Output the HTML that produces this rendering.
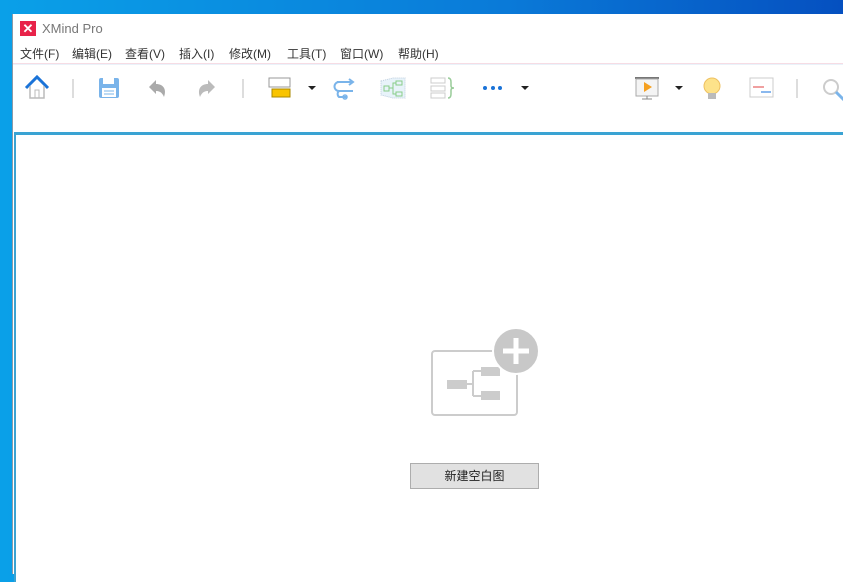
<!DOCTYPE html>
<html><head><meta charset="utf-8"><style>
*{margin:0;padding:0;box-sizing:border-box}
body{width:843px;height:572px;overflow:hidden;background:linear-gradient(90deg,#0aa0e8,#0a7ad8 60%,#0550c0);position:relative;font-family:"Liberation Sans","Noto Sans CJK SC",sans-serif}
#win{position:absolute;left:12px;top:14px;width:840px;height:560px;background:#fff;border-left:1px solid #8a9aa8}
.title{position:absolute;left:7px;top:7px;font-size:13px;color:#777;display:flex;align-items:center}
.logo{width:16px;height:15px;background:#e8234a;margin-right:6px;color:#fff;font-size:13px;font-weight:bold;line-height:15px;text-align:center}
.menu{position:absolute;left:0;top:31px;font-size:12px;color:#333;white-space:nowrap}
.menu span{position:absolute;top:0}
.pink{position:absolute;left:0;top:49px;width:840px;height:1px;background:#f6dce4}
.pink2{position:absolute;left:0;top:50px;width:840px;height:1px;background:#eaf2fa}
svg.tb{position:absolute;left:0;top:55px}
#canvas{position:absolute;left:1px;top:118px;width:840px;height:450px;border-top:3px solid #3aa3d3;border-left:2px solid #3aa3d3;background:#fff}
.btn{position:absolute;width:129px;height:26px;background:#e1e1e1;border:1px solid #adadad;font-size:12px;color:#222;text-align:center;line-height:24px}
</style></head><body>
<div id="win">
<div class="title"><div class="logo">✕</div>XMind Pro</div>
<div class="menu">
<span style="left:7px">文件(F)</span><span style="left:59px">编辑(E)</span><span style="left:112px">查看(V)</span><span style="left:166px">插入(I)</span><span style="left:216px">修改(M)</span><span style="left:274px">工具(T)</span><span style="left:327px">窗口(W)</span><span style="left:385px">帮助(H)</span>
</div>
<div class="pink"></div><div class="pink2"></div>
<svg class="tb" width="840" height="50" viewBox="12 69 840 50">
<path d="M25 88 L36 77 L47 88" fill="none" stroke="#1a73d8" stroke-width="3"/>
<path d="M29 86 V98 H43 V86" fill="none" stroke="#bbb" stroke-width="1.5"/>
<rect x="34" y="90" width="4" height="8" fill="none" stroke="#bbb"/>
<line x1="72" y1="79" x2="72" y2="98" stroke="#bbb"/>
<rect x="98" y="78" width="20" height="20" rx="2" fill="#7ab4ea"/>
<rect x="102" y="78" width="11" height="6" fill="#fff"/>
<rect x="101" y="88" width="14" height="9" fill="#fff"/>
<line x1="103" y1="91" x2="113" y2="91" stroke="#7ab4ea"/><line x1="103" y1="94" x2="113" y2="94" stroke="#7ab4ea"/>
<path d="M148 87 L155 80 V84 C162 84 166 89 163 97 C161 92 158 91 155 91 V94 Z" fill="#aaa"/>
<path d="M214 87 L207 80 V84 C200 84 196 89 199 97 C201 92 204 91 207 91 V94 Z" fill="#bbb"/>
<line x1="242" y1="79" x2="242" y2="98" stroke="#bbb"/>
<rect x="268" y="78" width="21" height="9" fill="#fff" stroke="#999"/>
<rect x="271" y="89" width="18" height="8" fill="#f9c400" stroke="#aa8800"/>
<path d="M307 86 h8 l-4 4z" fill="#222"/>
<path d="M336 82 H352 M348 79 l4 3 -4 3 M352 91 H338 a4 4 0 0 1 0-9 M338 91 a4 4 0 0 0 0 6 H346" fill="none" stroke="#7ab4ea" stroke-width="2"/>
<circle cx="344" cy="97" r="2" fill="none" stroke="#7ab4ea" stroke-width="1.5"/>
<path d="M380 81 L392 78 H404 V98 H392 L380 95 Z" fill="#e8f3fa" stroke="#bcd" stroke-dasharray="1 1"/>
<rect x="383" y="86" width="5" height="5" fill="none" stroke="#8c8"/><rect x="395" y="81" width="6" height="4" fill="none" stroke="#8c8"/><rect x="395" y="92" width="6" height="4" fill="none" stroke="#8c8"/>
<path d="M388 88 H392 V83 H395 M392 88 V94 H395" fill="none" stroke="#8c8"/>
<rect x="430" y="78" width="14" height="5" fill="none" stroke="#ccc"/><rect x="430" y="86" width="14" height="5" fill="none" stroke="#ccc"/><rect x="430" y="93" width="14" height="5" fill="none" stroke="#ccc"/>
<path d="M447 78 q3 0 3 4 v4 q0 2 3 2 q-3 0 -3 2 v4 q0 4 -3 4" fill="none" stroke="#9c9" stroke-width="1.5"/>
<circle cx="484" cy="88" r="2" fill="#1a73d8"/><circle cx="492" cy="88" r="2" fill="#1a73d8"/><circle cx="499" cy="88" r="2" fill="#1a73d8"/>
<path d="M520 86 h8 l-4 4z" fill="#222"/>
<rect x="634" y="77" width="24" height="2" fill="#777"/>
<rect x="635" y="79" width="22" height="17" fill="#f4f4f4" stroke="#aaa"/>
<path d="M643 82 L651 87 L643 92Z" fill="#f5a020"/>
<line x1="646" y1="96" x2="646" y2="99" stroke="#888"/><line x1="641" y1="99" x2="651" y2="99" stroke="#888"/>
<path d="M674 86 h8 l-4 4z" fill="#222"/>
<circle cx="711" cy="86" r="8" fill="#fde28a" stroke="#eec060"/>
<rect x="707" y="93" width="8" height="6" fill="#bbb"/>
<rect x="749" y="78" width="23" height="19" fill="#fff" stroke="#ccc"/>
<rect x="752" y="86" width="11" height="2" fill="#f0a0a0"/><rect x="760" y="91" width="10" height="2" fill="#8ab8ee"/>
<line x1="796" y1="79" x2="796" y2="98" stroke="#bbb"/>
<circle cx="830" cy="87" r="7" fill="none" stroke="#ccc" stroke-width="2"/>
<line x1="835" y1="92" x2="843" y2="100" stroke="#7ab4ea" stroke-width="3"/>
</svg>
<div id="canvas">
<svg style="position:absolute;left:402px;top:185px" width="130" height="100" viewBox="417 320 130 100">
<rect x="431" y="351" width="85" height="64" rx="3" fill="none" stroke="#ccc" stroke-width="2"/>
<rect x="446" y="380" width="20" height="9" fill="#ccc"/>
<rect x="480" y="367" width="19" height="9" fill="#ccc"/>
<rect x="480" y="391" width="19" height="9" fill="#ccc"/>
<path d="M466 384 H472 M472 371 V396 M472 371 H480 M472 396 H480" stroke="#ccc" stroke-width="2" fill="none"/>
<circle cx="515" cy="351" r="23" fill="#c8c8c8" stroke="#fff" stroke-width="2"/>
<path d="M515 338 V364 M502 351 H528" stroke="#fff" stroke-width="5"/>
</svg>
<div class="btn" style="left:394px;top:328px">新建空白图</div>
</div>
</div>
</body></html>
